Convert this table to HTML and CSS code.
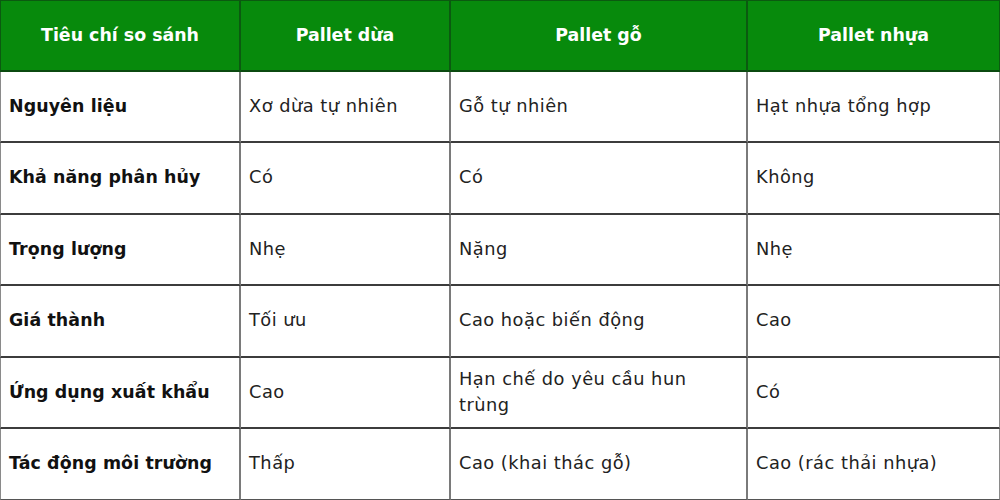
FILE: index.html
```html
<!DOCTYPE html>
<html lang="vi">
<head>
<meta charset="utf-8">
<link rel="stylesheet" href="styles.css">
</head>
<body>
<div class="table">
  <div class="cell head first">Tiêu chí so sánh</div>
  <div class="cell head">Pallet dừa</div>
  <div class="cell head">Pallet gỗ</div>
  <div class="cell head last">Pallet nhựa</div>

  <div class="cell label first">Nguyên liệu</div>
  <div class="cell">Xơ dừa tự nhiên</div>
  <div class="cell">Gỗ tự nhiên</div>
  <div class="cell last">Hạt nhựa tổng hợp</div>

  <div class="cell label first">Khả năng phân hủy</div>
  <div class="cell">Có</div>
  <div class="cell">Có</div>
  <div class="cell last">Không</div>

  <div class="cell label first">Trọng lượng</div>
  <div class="cell">Nhẹ</div>
  <div class="cell">Nặng</div>
  <div class="cell last">Nhẹ</div>

  <div class="cell label first">Giá thành</div>
  <div class="cell">Tối ưu</div>
  <div class="cell">Cao hoặc biến động</div>
  <div class="cell last">Cao</div>

  <div class="cell label first">Ứng dụng xuất khẩu</div>
  <div class="cell">Cao</div>
  <div class="cell">Hạn chế do yêu cầu hun trùng</div>
  <div class="cell last">Có</div>

  <div class="cell label first bottom">Tác động môi trường</div>
  <div class="cell bottom">Thấp</div>
  <div class="cell bottom">Cao (khai thác gỗ)</div>
  <div class="cell last bottom">Cao (rác thải nhựa)</div>
</div>
</body>
</html>
```

FILE: styles.css
```css
html, body {
  margin: 0;
  padding: 0;
  background: #ffffff;
}

.table {
  width: 1000px;
  height: 500px;
  display: grid;
  grid-template-columns: 241px 210px 297px 252px;
  grid-template-rows: 72px 71px 72px 71px 72px 71px 71px;
  font-family: "DejaVu Sans", "Open Sans", sans-serif;
  font-size: 17.8px;
  letter-spacing: 0.5px;
  color: #222222;
  box-sizing: border-box;
}

.cell {
  box-sizing: border-box;
  display: flex;
  align-items: center;
  padding: 0 10px 2px 8px;
  border-right: 2px solid #7a7a7a;
  border-bottom: 2px solid #3c3c3c;
  line-height: 26px;
}

.cell.first {
  border-left: 1px solid #8a8a8a;
}

.cell.last {
  border-right: 1px solid #8a8a8a;
}

.cell.bottom {
  border-bottom: 1px solid #555555;
}

.head {
  background: #078a0c;
  color: #ffffff;
  font-weight: 700;
  font-size: 17.4px;
  letter-spacing: 0;
  justify-content: center;
  padding: 0 4px 1px;
  border-top: 1px solid #0b5a10;
  border-right: 2px solid #0b5a10;
  border-bottom: 2px solid #0b4a10;
}

.head.first {
  border-left: 1px solid #0b5a10;
}

.head.last {
  border-right: 1px solid #0b5a10;
}

.label {
  font-weight: 700;
  font-size: 17.4px;
  letter-spacing: 0.1px;
  color: #111111;
}
```
